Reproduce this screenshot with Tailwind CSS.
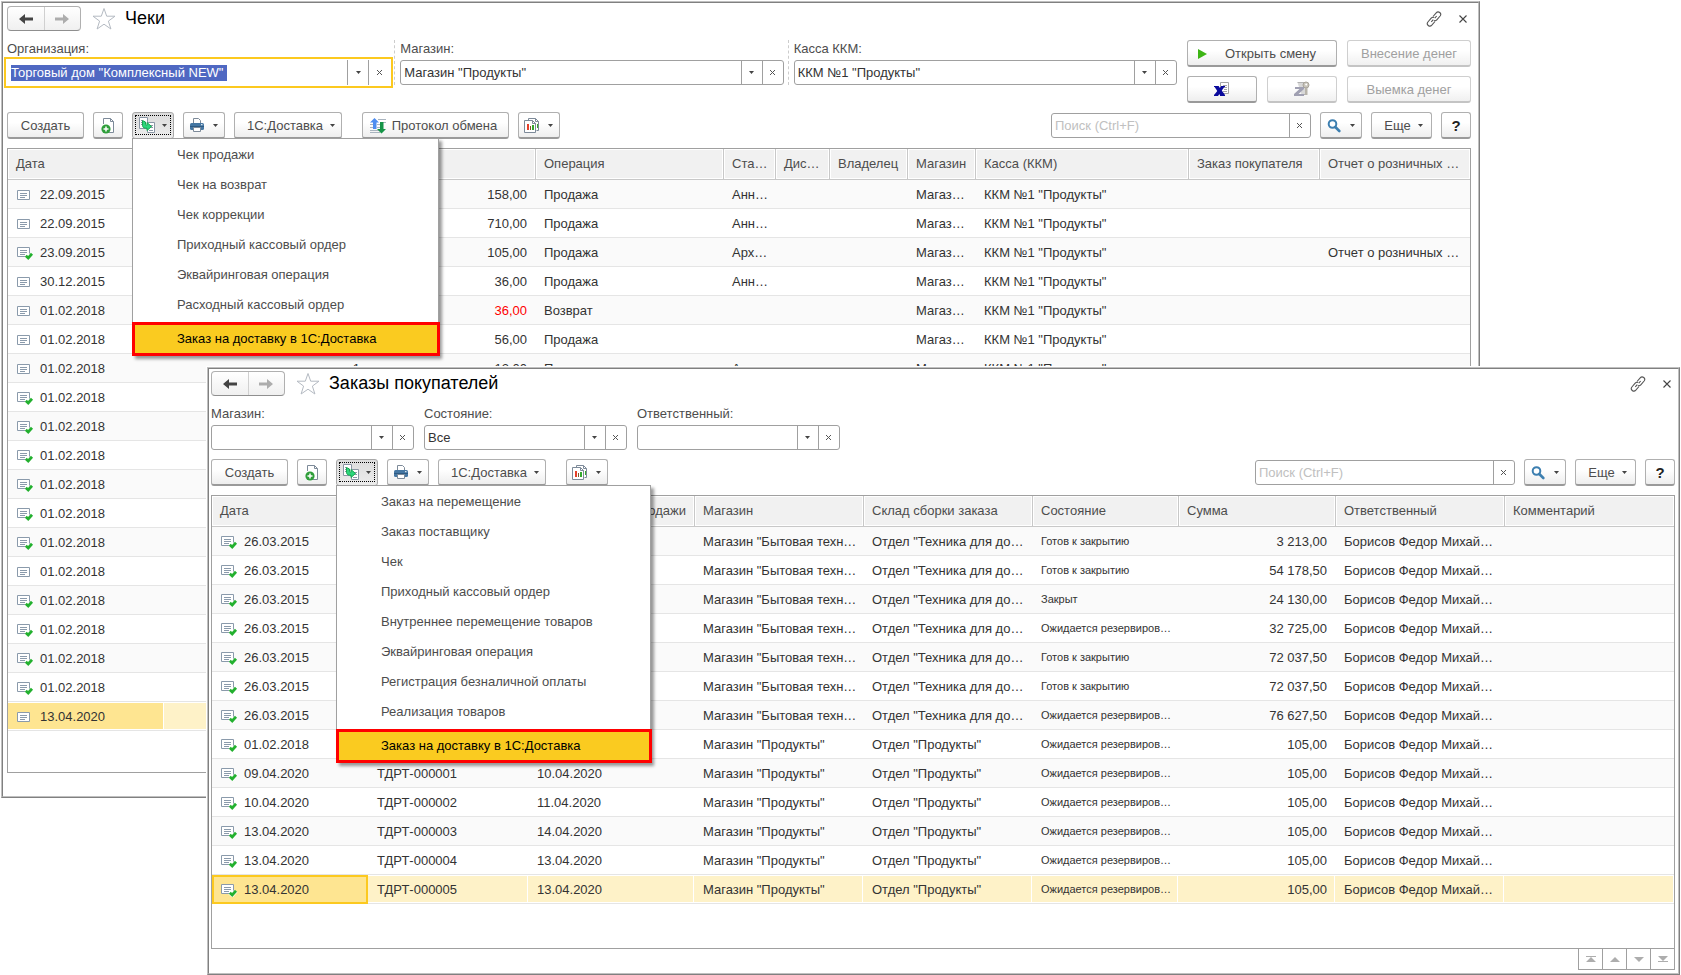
<!DOCTYPE html>
<html lang="ru">
<head>
<meta charset="utf-8">
<title>Чеки — Заказы покупателей</title>
<script src="https://cdn.jsdelivr.net/npm/@tailwindcss/browser@4"></script>
</head>
<body class="relative min-h-screen overflow-hidden bg-white font-['Liberation_Sans',Arial,sans-serif] text-[13px] leading-4 text-[#4d4d4d]">

<svg class="hidden" aria-hidden="true">
  <symbol id="i-back" viewBox="0 0 16 12"><path d="M1 6 7 1v3.500h8v3H7V11z" fill="#444"/></symbol>
  <symbol id="i-fwd" viewBox="0 0 16 12"><path d="M15 6 9 1v3.500H1v3h8V11z" fill="#adadad"/></symbol>
  <symbol id="i-star" viewBox="0 0 24 24"><path d="M12 1.500l2.700 7.700h8.300l-6.600 4.900 2.500 7.900-6.900-4.800-6.900 4.800 2.500-7.900L1 9.200h8.300z" fill="#fff" stroke="#b4bac2"/></symbol>
  <symbol id="i-link" viewBox="0 0 16 16"><g fill="none" stroke="#555" stroke-width="1.100"><path d="M7 5.500l3.200-3.700c1-1.100 2.400-1.200 3.500-.300 1.200 1 1.300 2.400.4 3.500l-3.300 3.800c-.8.900-1.900 1.100-2.900.7"/><path d="M9 10.500l-3.200 3.700c-1 1.100-2.400 1.200-3.500.300-1.200-1-1.300-2.400-.4-3.500l3.300-3.800c.8-.9 1.900-1.100 2.900-.7"/><path d="M5.300 10.800l2-2.200M8.700 7.200l2-2.200"/></g></symbol>
  <symbol id="i-close" viewBox="0 0 10 10"><path d="M1.500 1.500l7 7M8.500 1.500l-7 7" stroke="#444" stroke-width="1.100"/></symbol>
  <symbol id="i-x" viewBox="0 0 7 7"><path d="M1 1l5 5M6 1L1 6" stroke="#555"/></symbol>
  <symbol id="i-down" viewBox="0 0 5 3"><path d="M0 0h5L2.500 3z" fill="#444"/></symbol>
  <symbol id="i-add" viewBox="0 0 16 16"><path d="M3.500 6V.5h7l3 3v11H9" fill="#fff" stroke="#7d8a99"/><path d="M10.500.5v3h3" fill="none" stroke="#7d8a99"/><circle cx="6" cy="11" r="4.600" fill="#2f9e3a"/><path d="M6 8.500v5M3.500 11h5" stroke="#fff" stroke-width="1.500"/></symbol>
  <symbol id="i-based" viewBox="0 0 18 17"><path d="M1.500.5h8v11h-8z" fill="#fff" stroke="#8a96a5"/><path d="M3 3.500h1.500M3 5.500h1M3 7.500h1" stroke="#8a96a5"/><path d="M9.500 5.500h7v10h-7z" fill="#fff" stroke="#8a96a5"/><path d="M12 8.500h3M13 10.500h2M11 13.500h4" stroke="#8a96a5"/><path d="M4.500 3.500l3 1.500v2.500c0 .5.200.7.700.7h.8V5.500l4.500 4-4.500 4v-2.300H7.500c-1.800 0-3-1.200-3-3z" fill="#2bd67b" stroke="#17a54f"/></symbol>
  <symbol id="i-print" viewBox="0 0 16 16"><path d="M4.500 5.500v-5h5l2 2v3" fill="#fff" stroke="#7d8a99"/><rect x="1" y="5" width="14" height="7" rx="1.500" fill="#4577a3"/><path d="M1 8.500h14" stroke="#2e5a82"/><path d="M12 6.700h1.500" stroke="#fff"/><path d="M4.500 9.500h7v4h-7z" fill="#fff" stroke="#7d8a99"/></symbol>
  <symbol id="i-swap" viewBox="0 0 16 16"><path d="M0 6.500h3M0 9.500h3M0 12.500h10M8 1.500h8M0 14.500h10M13 4.500h3M7 6.500h4M7 9.500h4" stroke="#a9b4bf"/><path d="M4.500 0L0 4.500h3V11h3.500V4.500H9z" fill="#4d8df0"/><path d="M11.500 15.500L7 11h3V4h3.500v7H16z" fill="#159447"/></symbol>
  <symbol id="i-report" viewBox="0 0 16 16"><path d="M4.500 2.500v-2h7l3 3v9h-2" fill="#fff" stroke="#7d8a99"/><path d="M.5 2.500h8l3 3v9H.5z" fill="#fff" stroke="#7d8a99"/><path d="M11.500.5v3h3M8.500 2.500v3h3" fill="none" stroke="#7d8a99"/><path d="M3 6h2v6H3z" fill="#e5402b"/><path d="M6 8h1v4H6z" fill="#7a5a2a"/><path d="M8 7h2v5H8z" fill="#35a82f"/><path d="M13 6h1v4h-1z" fill="#35a82f"/></symbol>
  <symbol id="i-find" viewBox="0 0 14 14"><circle cx="5.500" cy="5" r="3.800" fill="#fff" stroke="#3d7fb0" stroke-width="2"/><path d="M8.300 8l4 4" stroke="#3d7fb0" stroke-width="2.600" stroke-linecap="round"/></symbol>
  <symbol id="i-play" viewBox="0 0 9 10"><path d="M0 0l9 5-9 5z" fill="#3db515"/></symbol>
  <symbol id="i-xrep" viewBox="0 0 16 16"><path d="M6.500 1.500h8v11h-8z" fill="#fff" stroke="#a5a5a5"/><path d="M9 4.500h4M10 6.500h3M10 8.500h3M9 10.500h4" stroke="#a5a5a5"/><path d="M0 5h4.500l6.500 9v1H6.500z" fill="#0a0a9c"/><path d="M11 5H7.500L0 14v1h4z" fill="#0a0a9c"/><path d="M0 5.500h4.500M7 5.500h4M0 14.500h4M6 14.500h5" stroke="#0a0a9c"/></symbol>
  <symbol id="i-zrep" viewBox="0 0 16 16"><path d="M3.500 1.500h9v12h-5" fill="#d8d8d8" stroke="#b2b2b2"/><circle cx="12" cy="4" r="3" fill="#c8c4ba" stroke="#a8a49a"/><path d="M11 7h2.500v7H11z" fill="#b8b4aa"/><circle cx="12.200" cy="3.500" r="1" fill="#fff"/><path d="M1 6h9v2l-5.500 5H10v2H0v-2l5.500-5H1z" fill="#a0a0b2"/></symbol>
  <symbol id="i-doc" viewBox="0 0 18 14"><path d="M1.500 2.500h12v9h-12z" fill="#fff" stroke="#8a9aab"/><path d="M4 5.500h7M4 7.500h7M4 9.500h5" stroke="#8a9aab"/></symbol>
  <symbol id="i-docok" viewBox="0 0 18 14"><path d="M1.500 1.500h12v9h-12z" fill="#fff" stroke="#8a9aab"/><path d="M4 4.500h7M4 6.500h7M4 8.500h5" stroke="#8a9aab"/><path d="M9.800 9.800l2.400 2.200 3.800-4.200" fill="none" stroke="#fff" stroke-width="4"/><path d="M9.800 9.800l2.400 2.200 3.800-4.200" fill="none" stroke="#23b02f" stroke-width="2.800"/></symbol>
</svg>

<!-- Чеки -->
<main class="absolute left-px right-[201px] top-px border border-[#c0c0c0] border-b-[#808080] border-r-[#808080]">
<div class="border border-[#808080] border-b-[#c0c0c0] border-r-[#c0c0c0] bg-white pb-[23px] pl-1 pr-[7px] pt-[3px]">
  <header class="flex h-[25px] items-center">
    <div class="flex h-[25px] w-[74px] rounded-sm border border-[#b0b0b0] border-b-[#8f8f8f] bg-linear-to-b from-white to-[#f0f0f0]">
      <button aria-label="Назад" class="flex flex-1 items-center justify-center border-r border-[#d0d0d0]"><svg class="h-3 w-4"><use href="#i-back"/></svg></button>
      <button aria-label="Вперед" class="flex flex-1 items-center justify-center"><svg class="h-3 w-4"><use href="#i-fwd"/></svg></button>
    </div>
    <button aria-label="В избранное" class="ml-[11px]"><svg class="h-6 w-6"><use href="#i-star"/></svg></button>
    <h1 class="ml-[9px] pb-px text-[18px] leading-6 text-black">Чеки</h1>
    <button aria-label="Ссылка" class="ml-auto"><svg class="h-4 w-4"><use href="#i-link"/></svg></button>
    <button aria-label="Закрыть" class="ml-4 mr-[3px]"><svg class="h-[10px] w-[10px]"><use href="#i-close"/></svg></button>
  </header>

  <div class="mt-[9px] flex gap-[10px]">
    <div class="grid flex-1 grid-cols-3 items-start gap-[10px]">
      <div>
        <label for="org" class="block h-5 pt-px">Организация:</label>
        <div class="flex h-[25px] outline-2 outline-offset-1 outline-[#fcc91f]">
          <div class="flex min-w-0 flex-1 items-center pl-1"><input id="org" value="Торговый дом &quot;Комплексный NEW&quot; " class="field-sizing-content h-4 bg-[#4f68c2] text-white outline-none"></div>
          <button aria-label="Выбрать" class="flex w-[21px] items-center justify-center border-l border-[#a0a0a0]"><svg class="h-[3px] w-[5px]"><use href="#i-down"/></svg></button>
          <button aria-label="Очистить" class="mr-px flex w-[21px] items-center justify-center border-l border-[#a0a0a0]"><svg class="h-[7px] w-[7px]"><use href="#i-x"/></svg></button>
        </div>
      </div>
      <div class="relative">
        <span class="absolute -left-[6px] top-0 h-[45px] border-l border-dashed border-[#ccc]"></span>
        <label for="shop" class="block h-5 pt-px">Магазин:</label>
        <div class="flex h-[25px] rounded-[3px] border border-[#a0a0a0]">
          <input id="shop" value="Магазин &quot;Продукты&quot;" class="min-w-0 flex-1 pl-[3px] text-[#333] outline-none">
          <button aria-label="Выбрать" class="flex w-[21px] items-center justify-center border-l border-[#a0a0a0] pr-px"><svg class="h-[3px] w-[5px]"><use href="#i-down"/></svg></button>
          <button aria-label="Очистить" class="flex w-[21px] items-center justify-center border-l border-[#a0a0a0] pr-px"><svg class="h-[7px] w-[7px]"><use href="#i-x"/></svg></button>
        </div>
      </div>
      <div class="relative">
        <span class="absolute -left-[6px] top-0 h-[45px] border-l border-dashed border-[#ccc]"></span>
        <label for="kkm" class="block h-5 pt-px">Касса ККМ:</label>
        <div class="flex h-[25px] rounded-[3px] border border-[#a0a0a0]">
          <input id="kkm" value="ККМ №1 &quot;Продукты&quot;" class="min-w-0 flex-1 pl-[3px] text-[#333] outline-none">
          <button aria-label="Выбрать" class="flex w-[21px] items-center justify-center border-l border-[#a0a0a0] pr-px"><svg class="h-[3px] w-[5px]"><use href="#i-down"/></svg></button>
          <button aria-label="Очистить" class="flex w-[21px] items-center justify-center border-l border-[#a0a0a0] pr-px"><svg class="h-[7px] w-[7px]"><use href="#i-x"/></svg></button>
        </div>
      </div>
    </div>
    <div class="grid grid-cols-[70px_70px_124px] gap-x-[10px] gap-y-[9px]">
      <button class="col-span-2 flex h-[27px] items-center rounded-[3px] border border-[#b0b0b0] border-b-2 border-b-[#9a9a9a] bg-linear-to-b from-white from-40% to-[#eee] pl-[10px] pt-px"><svg class="mr-[18px] h-[10px] w-[9px]"><use href="#i-play"/></svg>Открыть смену</button>
      <button disabled class="h-[27px] rounded-[3px] border border-[#cfcfcf] border-b-2 border-b-[#c4c4c4] bg-linear-to-b from-white from-40% to-[#f0f0f0] pt-px text-[#a0a0a0]">Внесение денег</button>
      <button aria-label="X-отчет" class="flex h-[27px] items-center justify-center rounded-[3px] border border-[#b0b0b0] border-b-2 border-b-[#9a9a9a] bg-linear-to-b from-white from-40% to-[#eee]"><svg class="h-4 w-4"><use href="#i-xrep"/></svg></button>
      <button disabled aria-label="Z-отчет" class="flex h-[27px] items-center justify-center rounded-[3px] border border-[#cfcfcf] border-b-2 border-b-[#c4c4c4] bg-linear-to-b from-white from-40% to-[#f0f0f0]"><svg class="h-4 w-4"><use href="#i-zrep"/></svg></button>
      <button disabled class="h-[27px] rounded-[3px] border border-[#cfcfcf] border-b-2 border-b-[#c4c4c4] bg-linear-to-b from-white from-40% to-[#f0f0f0] pt-px text-[#a0a0a0]">Выемка денег</button>
    </div>
  </div>

  <div class="mt-[9px] flex gap-[9px]" data-toolbar="checks"></div>

  <div class="mt-[9px] border border-[#a0a0a0] pb-[41px]">
    <table class="w-full table-fixed border-separate border-spacing-0" data-table="checks"></table>
  </div>
</div>
</main>

<!-- Заказы покупателей -->
<main class="absolute left-[207px] right-px top-[367px] border border-[#c0c0c0] border-b-[#808080] border-r-[#808080] shadow-[0_0_0_1px_#fff]">
<div class="border border-[#808080] border-b-[#c0c0c0] border-r-[#c0c0c0] bg-white pb-[3px] pl-[2px] pr-[3px] pt-[2px]">
  <header class="flex h-[25px] items-center">
    <div class="flex h-[25px] w-[74px] rounded-sm border border-[#b0b0b0] border-b-[#8f8f8f] bg-linear-to-b from-white to-[#f0f0f0]">
      <button aria-label="Назад" class="flex flex-1 items-center justify-center border-r border-[#d0d0d0]"><svg class="h-3 w-4"><use href="#i-back"/></svg></button>
      <button aria-label="Вперед" class="flex flex-1 items-center justify-center"><svg class="h-3 w-4"><use href="#i-fwd"/></svg></button>
    </div>
    <button aria-label="В избранное" class="ml-[11px]"><svg class="h-6 w-6"><use href="#i-star"/></svg></button>
    <h1 class="ml-[9px] pb-px text-[18px] leading-6 text-black">Заказы покупателей</h1>
    <button aria-label="Ссылка" class="ml-auto"><svg class="h-4 w-4"><use href="#i-link"/></svg></button>
    <button aria-label="Закрыть" class="ml-4 mr-[3px]"><svg class="h-[10px] w-[10px]"><use href="#i-close"/></svg></button>
  </header>

  <div class="mt-[9px] flex gap-[10px]" data-filters></div>
  <div class="mt-[9px] flex gap-[9px]" data-toolbar="orders"></div>

  <div class="mt-[9px] border border-[#a0a0a0] pb-[44px]">
    <table class="w-full table-fixed border-separate border-spacing-0" data-table="orders"></table>
  </div>
  <div class="-mt-px flex h-[22px] justify-end">
    <button aria-label="В начало" class="flex w-6 items-center justify-center border border-r-0 border-[#a0a0a0]"><svg class="h-2 w-[10px]" viewBox="0 0 10 8"><path d="M0 1h10v1H0zM5 2l5 5H0z" fill="#adadad"/></svg></button>
    <button aria-label="Вверх" class="flex w-6 items-center justify-center border border-r-0 border-[#a0a0a0]"><svg class="h-2 w-[10px]" viewBox="0 0 10 8"><path d="M5 2l5 5H0z" fill="#adadad"/></svg></button>
    <button aria-label="Вниз" class="flex w-6 items-center justify-center border border-r-0 border-[#a0a0a0]"><svg class="h-2 w-[10px]" viewBox="0 0 10 8"><path d="M5 7l5-5H0z" fill="#adadad"/></svg></button>
    <button aria-label="В конец" class="flex w-[25px] items-center justify-center border border-[#a0a0a0]"><svg class="h-2 w-[10px]" viewBox="0 0 10 8"><path d="M0 6h10v1H0zM5 6l5-5H0z" fill="#adadad"/></svg></button>
  </div>
</div>
</main>

<script>
const arrow = '<svg class="h-[3px] w-[5px]"><use href="#i-down"/></svg>';

const field = (id, label, value) => `
  <div class="w-[203px]">
    <label for="${id}" class="block h-5 pt-px">${label}</label>
    <div class="flex h-[25px] rounded-[3px] border border-[#a0a0a0]">
      <input id="${id}" value="${value}" class="min-w-0 flex-1 pl-[3px] text-[#333] outline-none">
      <button aria-label="Выбрать" class="flex w-[21px] items-center justify-center border-l border-[#a0a0a0] pr-px">${arrow}</button>
      <button aria-label="Очистить" class="flex w-[21px] items-center justify-center border-l border-[#a0a0a0] pr-px"><svg class="h-[7px] w-[7px]"><use href="#i-x"/></svg></button>
    </div>
  </div>`;
document.querySelector('[data-filters]').innerHTML =
  field('f-shop', 'Магазин:', '') + field('f-state', 'Состояние:', 'Все') + field('f-resp', 'Ответственный:', '');

const btn = (size, inner, label) => `<button ${label ? `aria-label="${label}"` : ''} class="${size} flex h-[27px] shrink-0 items-center justify-center rounded-[3px] border border-[#b0b0b0] border-b-2 border-b-[#9a9a9a] bg-linear-to-b from-white from-40% to-[#eee] pt-px">${inner}</button>`;
const iconBtn = (icon, label) => btn('w-[42px] gap-2 pr-[2px]', `<svg class="h-4 w-4"><use href="#${icon}"/></svg>${arrow}`, label);

const toolbar = (menuWidth, items, exchange) => `
  ${btn('w-[77px]', 'Создать')}
  ${btn('w-[30px]', '<svg class="h-4 w-4"><use href="#i-add"/></svg>', 'Создать копированием')}
  <div class="relative">
    <button aria-label="Создать на основании" aria-expanded="true" class="relative flex h-[27px] w-[42px] items-center justify-center gap-[6px] rounded-[3px] border border-[#a8a8a8] bg-linear-to-b from-[#dcdcdc] to-[#ececec] pr-[2px]">
      <span class="absolute inset-x-[2px] bottom-[3px] top-[2px] border border-dotted border-black"></span>
      <svg class="h-[17px] w-[18px]"><use href="#i-based"/></svg>${arrow}
    </button>
    <ul class="${menuWidth} absolute left-0 top-[26px] z-10 border border-b-0 border-[#a0a0a0] bg-white shadow-[3px_3px_3px_rgba(0,0,0,0.4)]">
      ${items.map(t => `<li><button class="block h-[30px] w-full pl-11 pt-[2px] text-left">${t}</button></li>`).join('')}
      <li class="-mr-[2px] mt-[3px]"><button class="-ml-px block h-[34px] w-[calc(100%+1px)] border-3 border-[#ff0000] bg-[#facb20] pl-[42px] text-left text-black">Заказ на доставку в 1С:Доставка</button></li>
    </ul>
  </div>
  ${iconBtn('i-print', 'Печать')}
  ${btn('w-[108px] gap-[7px] pl-[6px]', `1С:Доставка${arrow}`)}
  <div class="ml-[11px] flex gap-[9px]">
    ${exchange ? btn('w-[147px] gap-[6px] pr-1', '<svg class="h-4 w-4"><use href="#i-swap"/></svg>Протокол обмена') : ''}
    ${iconBtn('i-report', 'Отчеты')}
  </div>
  <div class="ml-auto mt-px flex h-[25px] w-[260px] rounded-[3px] border border-[#a0a0a0]">
    <input aria-label="Поиск" placeholder="Поиск (Ctrl+F)" class="min-w-0 flex-1 pl-[3px] outline-none placeholder:text-[#c0c0c0]">
    <button aria-label="Очистить" class="flex w-[21px] items-center justify-center border-l border-[#a0a0a0] pr-px"><svg class="h-[7px] w-[7px]"><use href="#i-x"/></svg></button>
  </div>
  ${btn('w-[42px] gap-[9px] pr-px', `<svg class="h-[14px] w-[14px]"><use href="#i-find"/></svg>${arrow}`, 'Найти')}
  ${btn('w-[61px] gap-[7px] pl-1', `Еще${arrow}`)}
  ${btn('w-[30px] text-[15px] font-bold text-[#222]', '?')}`;

document.querySelector('[data-toolbar="checks"]').innerHTML = toolbar('w-[307px]',
  ['Чек продажи', 'Чек на возврат', 'Чек коррекции', 'Приходный кассовый ордер', 'Эквайринговая операция', 'Расходный кассовый ордер'], true);
document.querySelector('[data-toolbar="orders"]').innerHTML = toolbar('w-[315px]',
  ['Заказ на перемещение', 'Заказ поставщику', 'Чек', 'Приходный кассовый ордер', 'Внутреннее перемещение товаров', 'Эквайринговая операция', 'Регистрация безналичной оплаты', 'Реализация товаров'], false);

function table(name, cols, rows, focused) {
  const head = cols.map((c, i) => `<th class="h-[31px] overflow-hidden whitespace-nowrap border-b border-[#c8c8c8] bg-[#f1f1f1] px-2 text-left font-normal shadow-[inset_0_0_0_1px_#fff] ${i ? 'border-l' : ''} ${c[2] === 'hr' ? 'text-right' : ''}">${c[0]}</th>`).join('');
  const body = rows.map((r, n) => {
    const selected = n === rows.length - 1;
    const cells = cols.map((c, i) => {
      let v = r[i + 1] ?? '';
      let cls = 'h-[29px] overflow-hidden whitespace-nowrap border-b border-[#e5e5e5] ';
      cls += i ? 'pl-[9px] ' : 'pl-2 ';
      cls += c[2] === 'r' ? 'pr-2 text-right ' : 'pr-0 ';
      cls += c[2] === 's' ? 'pb-px text-[11px] ' : 'pt-px ';
      if (v === '-36') { v = '36,00'; cls += 'text-[#ff0000] '; }
      if (selected) {
        cls += i ? 'bg-[#fef2c8] ' : 'bg-[#fee591] ';
        cls += !i && focused ? 'outline-2 -outline-offset-2 outline-[#fcc91f] '
          : 'shadow-[inset_-1px_0_#fff,inset_0_1px_#fff,inset_0_-1px_#fff] ';
      }
      if (!i) v = `<span class="flex items-center gap-[6px]"><svg class="h-[14px] w-[18px]"><use href="#${r[0] ? 'i-docok' : 'i-doc'}"/></svg>${v}</span>`;
      return `<td class="${cls}">${v}</td>`;
    }).join('');
    return `<tr class="${n % 2 ? 'bg-white' : 'bg-[#fafafa]'}">${cells}</tr>`;
  }).join('');
  document.querySelector(`[data-table="${name}"]`).innerHTML =
    `<colgroup>${cols.map(c => `<col style="${c[1] ? `width:${c[1]}px` : ''}">`).join('')}</colgroup><thead><tr>${head}</tr></thead><tbody class="text-[#333]">${body}</tbody>`;
}

const shop = 'Магаз…', kkm = 'ККМ №1 "Продукты"';
const feb = ok => [ok, '01.02.2018'];
table('checks', [['Дата', 156], ['', 204, 'r'], ['', 167, 'r'], ['Операция', 188], ['Ста…', 52], ['Дис…', 54], ['Владелец', 78], ['Магазин', 68], ['Касса (ККМ)', 213], ['Заказ покупателя', 131], ['Отчет о розничных …', 0]], [
  [0, '22.09.2015', '', '158,00', 'Продажа', 'Анн…', '', '', shop, kkm],
  [0, '22.09.2015', '', '710,00', 'Продажа', 'Анн…', '', '', shop, kkm],
  [1, '23.09.2015', '', '105,00', 'Продажа', 'Арх…', '', '', shop, kkm, '', 'Отчет о розничных …'],
  [0, '30.12.2015', '', '36,00', 'Продажа', 'Анн…', '', '', shop, kkm],
  [0, '01.02.2018', '', '-36', 'Возврат', '', '', '', shop, kkm],
  [0, '01.02.2018', '', '56,00', 'Продажа', '', '', '', shop, kkm],
  [0, '01.02.2018', '1', '12,00', 'Продажа', 'Анн…', '', '', shop, kkm],
  feb(1), feb(1), feb(1), feb(1), feb(1), feb(1), feb(0), feb(1), feb(1), feb(1), feb(1),
  [0, '13.04.2020'],
], false);

const who = 'Борисов Федор Михай…', prod = 'Магазин "Продукты"', dep = 'Отдел "Продукты"', wait = 'Ожидается резервиров…';
const tech = (state, sum) => [1, '26.03.2015', '', '', 'Магазин "Бытовая техн…', 'Отдел "Техника для до…', state, sum, who];
const order = (date, num, sale) => [1, date, num, sale, prod, dep, wait, '105,00', who];
table('orders', [['Дата', 156], ['', 160], ['Дата продажи', 166, 'hr'], ['Магазин', 169], ['Склад сборки заказа', 169], ['Состояние', 146, 's'], ['Сумма', 157, 'r'], ['Ответственный', 169], ['Комментарий', 0]], [
  tech('Готов к закрытию', '3 213,00'),
  tech('Готов к закрытию', '54 178,50'),
  tech('Закрыт', '24 130,00'),
  tech(wait, '32 725,00'),
  tech('Готов к закрытию', '72 037,50'),
  tech('Готов к закрытию', '72 037,50'),
  tech(wait, '76 627,50'),
  order('01.02.2018', '', ''),
  order('09.04.2020', 'ТДРТ-000001', '10.04.2020'),
  order('10.04.2020', 'ТДРТ-000002', '11.04.2020'),
  order('13.04.2020', 'ТДРТ-000003', '14.04.2020'),
  order('13.04.2020', 'ТДРТ-000004', '13.04.2020'),
  order('13.04.2020', 'ТДРТ-000005', '13.04.2020'),
], true);
</script>
</body>
</html>
